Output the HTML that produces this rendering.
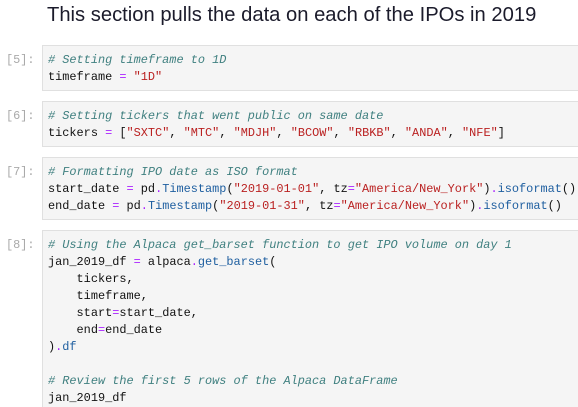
<!DOCTYPE html>
<html><head><style>
html,body{margin:0;background:#fff;width:578px;height:407px;overflow:hidden}
body{position:relative;font-family:"Liberation Sans",sans-serif}
.t{position:absolute;left:47px;top:4px;font-size:20.2px;color:#1b1b2b;white-space:nowrap}
.p{position:absolute;left:6px;font-family:"Liberation Mono",monospace;font-size:11.9px;color:#aaa;line-height:17px}
.c{position:absolute;left:42px;width:560px;background:#f5f5f5;border:1px solid #e0e0e0;box-sizing:border-box}
pre{margin:0;position:absolute;left:5px;font-family:"Liberation Mono",monospace;font-size:11.9px;line-height:17px;color:#111}
.cm{color:#408080;font-style:italic}
.s{color:#ba2121}
.o{color:#aa22ff}
.f{color:#1f5fa0}
</style></head><body>
<div class="t">This section pulls the data on each of the IPOs in 2019</div>

<div class="p" style="top:52px">[5]:</div>
<div class="c" style="top:45px;height:46px"><pre style="top:6px"><span class="cm"># Setting timeframe to 1D</span>
timeframe <span class="o">=</span> <span class="s">"1D"</span></pre></div>

<div class="p" style="top:108px">[6]:</div>
<div class="c" style="top:101px;height:46px"><pre style="top:6px"><span class="cm"># Setting tickers that went public on same date</span>
tickers <span class="o">=</span> [<span class="s">"SXTC"</span>, <span class="s">"MTC"</span>, <span class="s">"MDJH"</span>, <span class="s">"BCOW"</span>, <span class="s">"RBKB"</span>, <span class="s">"ANDA"</span>, <span class="s">"NFE"</span>]</pre></div>

<div class="p" style="top:164px">[7]:</div>
<div class="c" style="top:157px;height:63px"><pre style="top:6px"><span class="cm"># Formatting IPO date as ISO format</span>
start_date <span class="o">=</span> pd<span class="o">.</span><span class="f">Timestamp</span>(<span class="s">"2019-01-01"</span>, tz<span class="o">=</span><span class="s">"America/New_York"</span>)<span class="o">.</span><span class="f">isoformat</span>()
end_date <span class="o">=</span> pd<span class="o">.</span><span class="f">Timestamp</span>(<span class="s">"2019-01-31"</span>, tz<span class="o">=</span><span class="s">"America/New_York"</span>)<span class="o">.</span><span class="f">isoformat</span>()</pre></div>

<div class="p" style="top:237px">[8]:</div>
<div class="c" style="top:230px;height:177px;border-bottom:none"><pre style="top:6px"><span class="cm"># Using the Alpaca get_barset function to get IPO volume on day 1</span>
jan_2019_df <span class="o">=</span> alpaca<span class="o">.</span><span class="f">get_barset</span>(
    tickers,
    timeframe,
    start<span class="o">=</span>start_date,
    end<span class="o">=</span>end_date
)<span class="o">.</span><span class="f">df</span>

<span class="cm"># Review the first 5 rows of the Alpaca DataFrame</span>
jan_2019_df</pre></div>
</body></html>
